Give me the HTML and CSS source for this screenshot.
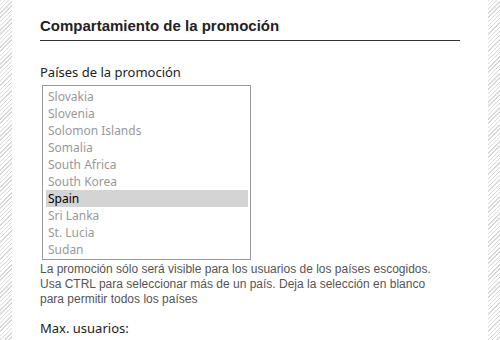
FILE: index.html
```html
<!DOCTYPE html>
<html lang="es">
<head>
<meta charset="UTF-8">
<title>Compartamiento de la promoción</title>
<link rel="stylesheet" href="styles.css">
</head>
<body>
<div class="page">
<div class="container">
<h2 class="section-title">Compartamiento de la promoción</h2>
<div class="form-group">
<label class="field-label">Países de la promoción</label>
<ul class="country-list">
<li>Slovakia</li>
<li>Slovenia</li>
<li>Solomon Islands</li>
<li>Somalia</li>
<li>South Africa</li>
<li>South Korea</li>
<li class="selected">Spain</li>
<li>Sri Lanka</li>
<li>St. Lucia</li>
<li>Sudan</li>
</ul>
<p class="help-text">La promoción sólo será visible para los usuarios de los países escogidos. Usa CTRL para seleccionar más de un país. Deja la selección en blanco para permitir todos los países</p>
</div>
<div class="form-group form-group-tight">
<label class="field-label">Max. usuarios:</label>
</div>
</div>
</div>
</body>
</html>
```

FILE: styles.css
```css
body {
margin: 0;
padding: 0;
background-color: #fff;
background-image: repeating-linear-gradient(-45deg, #fff 0, #fff 2px, #d8d8d8 2px, #d8d8d8 3px);
font-family: 'Liberation Sans', Arial, sans-serif;
}
.page {
margin: 0 12px;
min-height: 340px;
background-color: #fff;
}
.container {
padding: 17px 28px 0 28px;
width: 420px;
}
.section-title {
margin: 0;
padding-bottom: 6px;
border-bottom: 1px solid #333;
font-size: 15px;
font-weight: bold;
color: #222;
}
.form-group {
margin-top: 22px;
}
.form-group-tight {
margin-top: 12px;
}
.field-label {
display: block;
font-family: 'Noto Sans', sans-serif;
font-size: 13px;
color: #222;
margin-bottom: 4px;
}
.country-list {
list-style: none;
margin: 0 0 0 2px;
padding: 2px 2px 1px 3px;
width: 202px;
border: 1px solid #999;
font-family: 'Noto Sans', sans-serif;
font-size: 12px;
}
.country-list li {
height: 17px;
line-height: 17px;
padding-left: 2px;
color: #999;
}
.country-list li.selected {
background-color: #d4d4d4;
color: #000;
}
.help-text {
margin: 2px 0 0 0;
max-width: 400px;
font-size: 12px;
line-height: 15px;
color: #555;
}
```
